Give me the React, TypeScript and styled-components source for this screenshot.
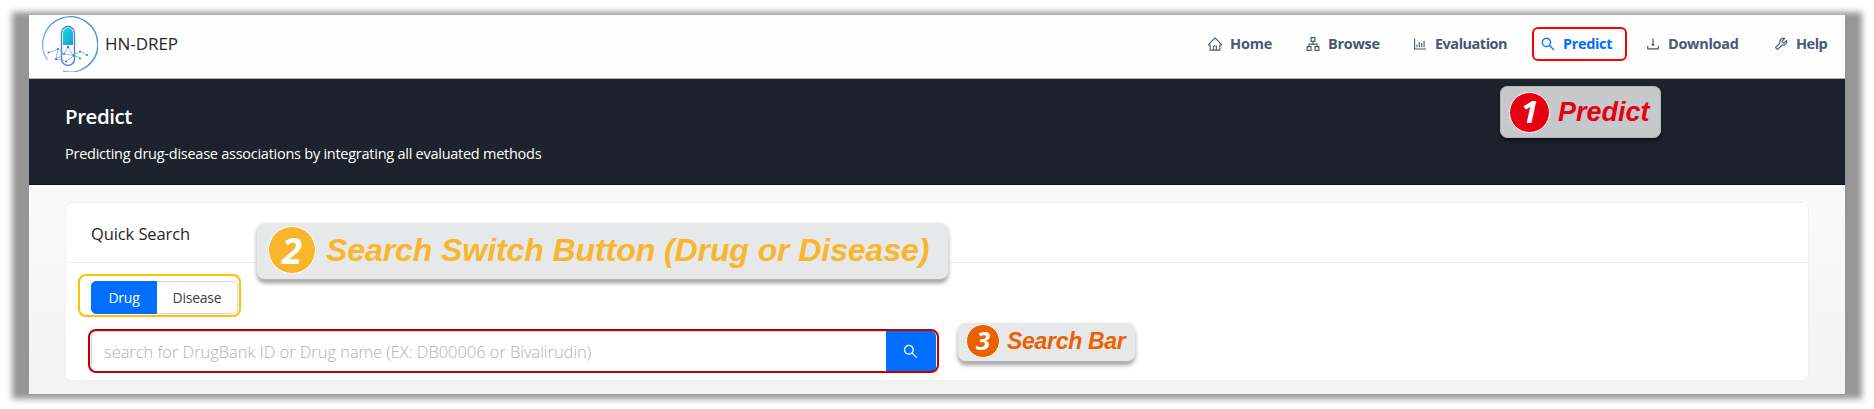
import React from "react";
import styled, { createGlobalStyle, css } from "styled-components";
import {
  AiOutlineHome,
  AiOutlineApartment,
  AiOutlineBarChart,
  AiOutlineSearch,
  AiOutlineDownload,
  AiOutlineTool,
} from "react-icons/ai";

const GlobalStyle = createGlobalStyle`
  *, *::before, *::after { box-sizing: border-box; }
  body {
    margin: 0;
    background: #fff;
    font-family: "Open Sans", "Noto Sans", sans-serif;
    overflow: hidden;
  }
`;

const Stage = styled.div`
  width: 1874px;
  height: 409px;
  padding: 15px 29px;
  position: relative;
  z-index: 0;
`;

const Frame = styled.div`
  position: relative;
  width: 1816px;
  height: 379px;
  display: flex;
  flex-direction: column;

  &::before {
    content: "";
    position: absolute;
    z-index: -1;
    inset: -3px -17px -5px -17px;
    background: #969696;
    filter: blur(3px);
  }
`;

const Header = styled.header`
  height: 64px;
  flex: none;
  display: flex;
  justify-content: space-between;
  background: #fefefe;
  border-bottom: 1px solid #aeb0b2;
`;

const Brand = styled.div`
  display: flex;
  align-items: flex-start;
  padding-left: 11px;
`;

const BrandName = styled.span`
  margin: 16px 0 0 7px;
  font-size: 17px;
  line-height: 26px;
  letter-spacing: -0.05px;
  color: #262626;
`;

const Nav = styled.nav`
  display: flex;
  height: 57px;
  align-items: center;
`;

const NavItem = styled.a<{ $width: number; $active?: boolean }>`
  position: relative;
  display: flex;
  align-items: center;
  gap: 7px;
  width: ${(p) => p.$width}px;
  padding-left: 1px;
  font-size: 14.5px;
  font-weight: 700;
  line-height: 22px;
  white-space: nowrap;
  color: ${(p) => (p.$active ? "#006fff" : "#475873")};

  svg {
    flex: none;
    width: 16px;
    height: 16px;
  }

  ${(p) =>
    p.$active &&
    css`
      &::after {
        content: "";
        position: absolute;
        left: -7px;
        top: -6px;
        width: 95px;
        height: 34px;
        border: 2px solid #fb0007;
        border-radius: 6px;
      }
    `}
`;

const NavLabel = styled.span<{ $spacing: number }>`
  letter-spacing: ${(p) => p.$spacing}px;
`;

const Banner = styled.section`
  height: 106px;
  flex: none;
  padding: 23px 36px 0;
  background: #1c232c;
  border-bottom: 1px solid #0f171f;
  color: #fff;
`;

const BannerTitle = styled.h1`
  margin: 0;
  font-size: 20.5px;
  font-weight: 600;
  line-height: 28px;
  letter-spacing: -0.45px;
`;

const BannerText = styled.p`
  margin: 13px 0 0;
  font-size: 14.5px;
  line-height: 22px;
  letter-spacing: -0.255px;
`;

const Main = styled.main`
  flex: 1;
  padding: 17px 36px 13px;
  background: linear-gradient(#fafafa, #f3f3f3);
`;

const Card = styled.section`
  height: 179px;
  border: 1px solid #f0f0f0;
  border-radius: 6px;
  background: #fff;
`;

const CardHeader = styled.h2`
  margin: 0;
  height: 60px;
  padding: 16px 25px 0;
  border-bottom: 1px solid #f0f0f0;
  font-size: 16.5px;
  font-weight: 400;
  line-height: 30px;
  letter-spacing: -0.1px;
  color: #262626;
`;

const CardBody = styled.div`
  display: flex;
  flex-direction: column;
  align-items: flex-start;
  gap: 17px;
  padding: 18px 25px 0;
`;

const Outlined = styled.div<{ $color: string; $inset: string }>`
  position: relative;
  display: flex;

  &::after {
    content: "";
    position: absolute;
    inset: ${(p) => p.$inset};
    border: 2px solid ${(p) => p.$color};
    border-radius: 8px;
    pointer-events: none;
  }
`;

const SwitchButton = styled.button<{ $active?: boolean }>`
  width: ${(p) => (p.$active ? 66 : 81)}px;
  height: 33px;
  padding: 0;
  border: 1px solid ${(p) => (p.$active ? "#006fff" : "#d9d9d9")};
  border-left-width: ${(p) => (p.$active ? 1 : 0)}px;
  border-radius: ${(p) => (p.$active ? "5px 0 0 5px" : "0 5px 5px 0")};
  background: ${(p) => (p.$active ? "#006fff" : "#fff")};
  color: ${(p) => (p.$active ? "#fff" : "#404040")};
  font: 400 14px/22px "Open Sans", sans-serif;
  letter-spacing: -0.25px;
`;

const SearchInput = styled.input`
  width: 795px;
  height: 41px;
  padding: 0 12px;
  border: 1px solid #d9d9d9;
  border-right: 0;
  border-radius: 5px 0 0 5px;
  outline: 0;
  font: 300 16.5px/26px "Open Sans", sans-serif;
  letter-spacing: -0.05px;

  &::placeholder {
    color: #b0b0b0;
    opacity: 1;
  }
`;

const SearchButton = styled.button`
  display: flex;
  align-items: center;
  justify-content: center;
  width: 50px;
  height: 41px;
  padding: 0 2px 0 0;
  border: 0;
  border-radius: 0 5px 5px 0;
  background: #006fff;
  color: #fff;
`;

type CalloutProps = {
  $x: number;
  $y: number;
  $w: number;
  $h: number;
  $size: number;
  $spacing: number;
  $color: string;
  $dark?: boolean;
};

const Callout = styled.div<CalloutProps>`
  position: absolute;
  left: ${(p) => p.$x}px;
  top: ${(p) => p.$y}px;
  width: ${(p) => p.$w}px;
  height: ${(p) => p.$h}px;
  display: flex;
  align-items: center;
  padding: 0 0 ${(p) => (p.$dark ? 0 : 2)}px 9px;
  border-radius: 8px;
  background: ${(p) => (p.$dark ? "#c6c9cc" : "#e7e8ea")};
  box-shadow: ${(p) =>
    p.$dark
      ? "inset 0 0 1px 1px #b4b7ba, 0 3px 4px rgba(0, 0, 0, 0.5)"
      : "0 0 3px rgba(231, 232, 234, 0.9), 0 4px 4px rgba(0, 0, 0, 0.4)"};
  font: italic 700 ${(p) => p.$size}px/1 "Liberation Sans", Arial, sans-serif;
  letter-spacing: ${(p) => p.$spacing}px;
  color: ${(p) => p.$color};
  white-space: nowrap;
`;

const Marker = styled.span<{ $d: number; $left: number; $gap: number; $color: string }>`
  display: flex;
  flex: none;
  align-items: center;
  justify-content: center;
  width: ${(p) => p.$d}px;
  height: ${(p) => p.$d}px;
  margin: 0 ${(p) => p.$gap}px 0 ${(p) => p.$left}px;
  border: 1px solid #fff;
  border-radius: 50%;
  background: ${(p) => p.$color};
  color: #fff;
  font: italic 700 ${(p) => p.$d * 0.76}px/1 "Open Sans", sans-serif;
`;

const LogoMark = styled.svg`
  margin-top: -1px;
`;

const Logo = () => (
  <LogoMark width="58" height="58" viewBox="0 0 58 58" fill="none">
    <defs>
      <linearGradient id="pill" x1="0" y1="0" x2="1" y2="1">
        <stop offset="0.1" stopColor="#0be0c4" />
        <stop offset="1" stopColor="#2a8df0" />
      </linearGradient>
      <linearGradient id="ring" x1="1" y1="0" x2="0" y2="1">
        <stop offset="0.5" stopColor="#4b92e6" />
        <stop offset="1" stopColor="#b3d4fa" />
      </linearGradient>
    </defs>
    <path d="M7.500 46A27.600 27.600 0 1 1 23 57" stroke="url(#ring)" strokeWidth="1.400" />
    <rect x="21.500" y="12.500" width="13" height="39" rx="6.500" fill="#fff" stroke="#4a86d4" strokeWidth="1.400" />
    <path d="M23 31V19a5 5 0 0 1 10 0v12z" fill="url(#pill)" />
    <g stroke="#7ba6d8" strokeWidth="0.800">
      <path d="M9 38.500l9-3.500-2 10 8 1.500M16 45l8-5 4-7 5 8 7-3.500 7 3.500M24 40l10 1.500 6 2.500M26 47.500l8-6M24 40l-6-5" />
    </g>
    <g fill="#3f7ccb">
      <circle cx="8.500" cy="38.500" r="1" />
      <circle cx="18" cy="35" r="1" />
      <circle cx="16" cy="45" r="1.100" />
      <circle cx="28" cy="33" r="1.200" />
      <circle cx="24" cy="40" r="1" />
      <circle cx="33.500" cy="41.500" r="1" />
      <circle cx="26" cy="47.500" r="1.100" />
      <circle cx="40" cy="37.500" r="1" />
      <circle cx="47" cy="41" r="1.100" />
      <circle cx="40" cy="44.500" r="1" />
    </g>
  </LogoMark>
);

const navItems = [
  { label: "Home", Icon: AiOutlineHome, width: 98, spacing: -0.2 },
  { label: "Browse", Icon: AiOutlineApartment, width: 107, spacing: -0.3 },
  { label: "Evaluation", Icon: AiOutlineBarChart, width: 128, spacing: -0.5 },
  { label: "Predict", Icon: AiOutlineSearch, width: 105, spacing: -0.35 },
  { label: "Download", Icon: AiOutlineDownload, width: 128, spacing: -0.3 },
  { label: "Help", Icon: AiOutlineTool, width: 73, spacing: -0.5 },
];

export default function App() {
  return (
    <Stage>
      <GlobalStyle />
      <Frame>
        <Header>
          <Brand>
            <Logo />
            <BrandName>HN-DREP</BrandName>
          </Brand>
          <Nav>
            {navItems.map(({ label, Icon, width, spacing }) => (
              <NavItem key={label} $width={width} $active={label === "Predict"}>
                <Icon />
                <NavLabel $spacing={spacing}>{label}</NavLabel>
              </NavItem>
            ))}
          </Nav>
        </Header>
        <Banner>
          <BannerTitle>Predict</BannerTitle>
          <BannerText>
            Predicting drug-disease associations by integrating all evaluated methods
          </BannerText>
        </Banner>
        <Main>
          <Card>
            <CardHeader>Quick Search</CardHeader>
            <CardBody>
              <Outlined $color="#ffc000" $inset="-7px -3px -3px -13px">
                <SwitchButton $active>Drug</SwitchButton>
                <SwitchButton>Disease</SwitchButton>
              </Outlined>
              <Outlined $color="#c00000" $inset="-2px -3px -1px -3px">
                <SearchInput placeholder="search for DrugBank ID or Drug name (EX: DB00006 or Bivalirudin)" />
                <SearchButton aria-label="Search">
                  <AiOutlineSearch size={17} />
                </SearchButton>
              </Outlined>
            </CardBody>
          </Card>
        </Main>
        <Callout $x={1471} $y={71} $w={161} $h={52} $size={27} $spacing={0} $color="#e60012" $dark>
          <Marker $d={41} $left={0} $gap={8} $color="#e60012">1</Marker>
          Predict
        </Callout>
        <Callout $x={228} $y={208} $w={691} $h={56} $size={32} $spacing={-0.08} $color="#f8b62d">
          <Marker $d={48} $left={2} $gap={10} $color="#f8b62d">2</Marker>
          Search Switch Button (Drug or Disease)
        </Callout>
        <Callout $x={929} $y={308} $w={177} $h={38} $size={23} $spacing={-0.3} $color="#eb6100">
          <Marker $d={34} $left={-1} $gap={7} $color="#eb6100">3</Marker>
          Search Bar
        </Callout>
      </Frame>
    </Stage>
  );
}
